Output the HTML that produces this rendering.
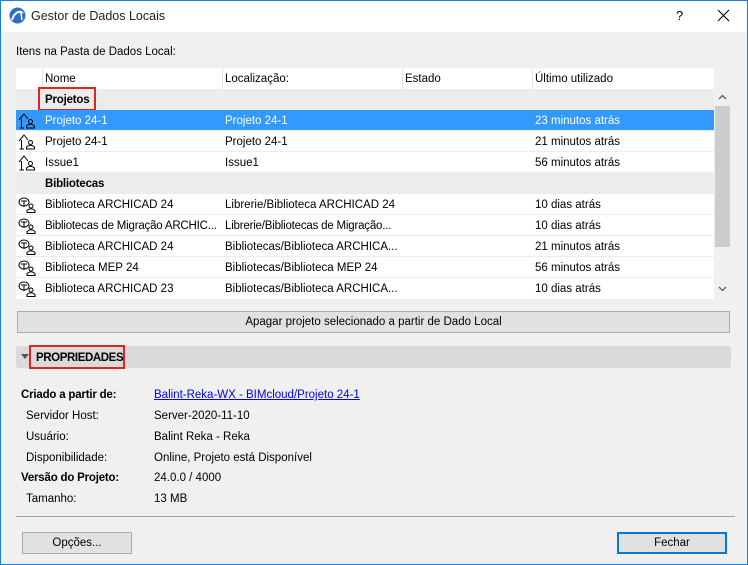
<!DOCTYPE html>
<html><head><meta charset="utf-8"><style>
*{margin:0;padding:0;box-sizing:border-box}
body{width:748px;height:565px;overflow:hidden;background:#f0f0f0;font-family:"Liberation Sans",sans-serif;font-size:11.5px;color:#000;position:relative}
.a{position:absolute;white-space:nowrap}
.t{margin-top:1px}
.win{position:absolute;left:0;top:0;width:748px;height:565px;border:1px solid #1a7fd4}
.row{position:absolute;left:16px;width:698px;height:21px;background:#fff;border-bottom:1px solid #ececec}
.row span{position:absolute;top:5px}
.grp{background:#ececec;border:none}
.sel{background:#3399ff;color:#fff}
.btn{position:absolute;background:#e1e1e1;border:1px solid #adadad;text-align:center;line-height:21px}
.b{font-weight:bold;letter-spacing:-0.2px}
svg{position:absolute}
</style></head><body>
<div class="win"></div>
<div class="a" style="left:1px;top:1px;width:746px;height:31px;background:#fff"></div>
<svg style="left:9px;top:7px" width="17" height="17" viewBox="0 0 17 17"><circle cx="8.5" cy="8.5" r="8" fill="#2c6fc9"/><path d="M3 13 C5 6 10 3 14 6" stroke="#fff" stroke-width="2" fill="none"/><path d="M12 6 L13 13" stroke="#fff" stroke-width="1.5"/></svg>
<div class="a" style="left:31px;top:9px;font-size:12.5px;color:#222">Gestor de Dados Locais</div>
<div class="a" style="left:676px;top:8px;font-size:13px">?</div>
<svg style="left:717px;top:9px" width="13" height="13"><path d="M1 1L12 12M12 1L1 12" stroke="#000" stroke-width="1.1"/></svg>
<div class="a" style="left:16px;top:46px">Itens na Pasta de Dados Local:</div>

<div class="a" style="left:16px;top:68px;width:698px;height:21px;background:#fff"></div>
<div class="a" style="left:42px;top:68px;width:1px;height:21px;background:#e5e5e5"></div>
<div class="a" style="left:222px;top:68px;width:1px;height:21px;background:#e5e5e5"></div>
<div class="a" style="left:402px;top:68px;width:1px;height:21px;background:#e5e5e5"></div>
<div class="a" style="left:532px;top:68px;width:1px;height:21px;background:#e5e5e5"></div>
<div class="a" style="left:45px;top:73px">Nome</div>
<div class="a" style="left:225px;top:73px">Localização:</div>
<div class="a" style="left:405px;top:73px">Estado</div>
<div class="a" style="left:535px;top:73px">Último utilizado</div>

<div class="row grp" style="top:89px"><span class="b" style="left:29px">Projetos</span></div>
<div class="a" style="left:38px;top:87px;width:58px;height:24px;border:2px solid #e52222"></div>
<div class="row sel" style="top:110px"><span style="left:29px">Projeto 24-1</span><span style="left:209px">Projeto 24-1</span><span style="left:519px">23 minutos atrás</span></div>
<div class="row" style="top:131px"><span style="left:29px">Projeto 24-1</span><span style="left:209px">Projeto 24-1</span><span style="left:519px">21 minutos atrás</span></div>
<div class="row" style="top:152px"><span style="left:29px">Issue1</span><span style="left:209px">Issue1</span><span style="left:519px">56 minutos atrás</span></div>
<div class="row grp" style="top:173px"><span class="b" style="left:29px">Bibliotecas</span></div>
<div class="row" style="top:194px"><span style="left:29px">Biblioteca ARCHICAD 24</span><span style="left:209px">Librerie/Biblioteca ARCHICAD 24</span><span style="left:519px">10 dias atrás</span></div>
<div class="row" style="top:215px"><span style="left:29px;letter-spacing:-0.2px">Bibliotecas de Migração ARCHIC...</span><span style="left:209px;letter-spacing:-0.2px">Librerie/Bibliotecas de Migração...</span><span style="left:519px">10 dias atrás</span></div>
<div class="row" style="top:236px"><span style="left:29px">Biblioteca ARCHICAD 24</span><span style="left:209px">Bibliotecas/Biblioteca ARCHICA...</span><span style="left:519px">21 minutos atrás</span></div>
<div class="row" style="top:257px"><span style="left:29px">Biblioteca MEP 24</span><span style="left:209px">Bibliotecas/Biblioteca MEP 24</span><span style="left:519px">56 minutos atrás</span></div>
<div class="row" style="top:278px;border:none"><span style="left:29px">Biblioteca ARCHICAD 23</span><span style="left:209px">Bibliotecas/Biblioteca ARCHICA...</span><span style="left:519px">10 dias atrás</span></div>

<svg style="left:18px;top:112px" width="20" height="18"><g stroke="#000" fill="none" stroke-width="1"><path d="M1 8 L6 2 L10 7"/><path d="M3.5 7 V16 M1.5 16 H6"/><circle cx="12.5" cy="9.5" r="2"/><path d="M8.5 16 V14 Q12.5 10.5 16.5 14 V16 Z"/></g></svg>
<svg style="left:18px;top:133px" width="20" height="18"><g stroke="#000" fill="none" stroke-width="1"><path d="M1 8 L6 2 L10 7"/><path d="M3.5 7 V16 M1.5 16 H6"/><circle cx="12.5" cy="9.5" r="2"/><path d="M8.5 16 V14 Q12.5 10.5 16.5 14 V16 Z"/></g></svg>
<svg style="left:18px;top:154px" width="20" height="18"><g stroke="#000" fill="none" stroke-width="1"><path d="M1 8 L6 2 L10 7"/><path d="M3.5 7 V16 M1.5 16 H6"/><circle cx="12.5" cy="9.5" r="2"/><path d="M8.5 16 V14 Q12.5 10.5 16.5 14 V16 Z"/></g></svg>
<svg style="left:18px;top:196px" width="20" height="18"><g stroke="#000" fill="none" stroke-width="1"><ellipse cx="6" cy="6" rx="5" ry="4"/><path d="M3 5 H9 M6 5 V11"/><circle cx="13" cy="10" r="2"/><path d="M9 16.5 V14.5 Q13 11 17 14.5 V16.5 Z"/></g></svg>
<svg style="left:18px;top:217px" width="20" height="18"><g stroke="#000" fill="none" stroke-width="1"><ellipse cx="6" cy="6" rx="5" ry="4"/><path d="M3 5 H9 M6 5 V11"/><circle cx="13" cy="10" r="2"/><path d="M9 16.5 V14.5 Q13 11 17 14.5 V16.5 Z"/></g></svg>
<svg style="left:18px;top:238px" width="20" height="18"><g stroke="#000" fill="none" stroke-width="1"><ellipse cx="6" cy="6" rx="5" ry="4"/><path d="M3 5 H9 M6 5 V11"/><circle cx="13" cy="10" r="2"/><path d="M9 16.5 V14.5 Q13 11 17 14.5 V16.5 Z"/></g></svg>
<svg style="left:18px;top:259px" width="20" height="18"><g stroke="#000" fill="none" stroke-width="1"><ellipse cx="6" cy="6" rx="5" ry="4"/><path d="M3 5 H9 M6 5 V11"/><circle cx="13" cy="10" r="2"/><path d="M9 16.5 V14.5 Q13 11 17 14.5 V16.5 Z"/></g></svg>
<svg style="left:18px;top:280px" width="20" height="18"><g stroke="#000" fill="none" stroke-width="1"><ellipse cx="6" cy="6" rx="5" ry="4"/><path d="M3 5 H9 M6 5 V11"/><circle cx="13" cy="10" r="2"/><path d="M9 16.5 V14.5 Q13 11 17 14.5 V16.5 Z"/></g></svg>

<div class="a" style="left:714px;top:89px;width:16px;height:209px;background:#f0f0f0"></div>
<div class="a" style="left:715px;top:106px;width:15px;height:141px;background:#cdcdcd"></div>
<svg style="left:718px;top:94px" width="9" height="6"><path d="M1 5 L4.5 1.5 L8 5" stroke="#606060" fill="none" stroke-width="1.3"/></svg>
<svg style="left:718px;top:286px" width="9" height="6"><path d="M1 1 L4.5 4.5 L8 1" stroke="#606060" fill="none" stroke-width="1.3"/></svg>

<div class="btn" style="left:17px;top:311px;width:713px;height:22px">Apagar projeto selecionado a partir de Dado Local</div>

<div class="a" style="left:16px;top:346px;width:715px;height:22px;background:#dadada;border-radius:3px"></div>
<svg style="left:21px;top:354px" width="8" height="6"><path d="M0 0 H8 L4 5 Z" fill="#555"/></svg>
<div class="a" style="left:29px;top:345px;width:96px;height:24px;border:2px solid #e52222"></div>
<div class="a b" style="left:36px;top:352px;letter-spacing:-0.4px">PROPRIEDADES</div>

<div class="a b" style="left:21px;top:389px">Criado a partir de:</div>
<div class="a" style="left:154px;top:389px;color:#0000ee;text-decoration:underline">Balint-Reka-WX - BIMcloud/Projeto 24-1</div>
<div class="a" style="left:26px;top:410px">Servidor Host:</div>
<div class="a" style="left:154px;top:410px">Server-2020-11-10</div>
<div class="a" style="left:26px;top:431px">Usuário:</div>
<div class="a" style="left:154px;top:431px">Balint Reka - Reka</div>
<div class="a" style="left:26px;top:452px">Disponibilidade:</div>
<div class="a" style="left:154px;top:452px">Online, Projeto está Disponível</div>
<div class="a b" style="left:21px;top:472px">Versão do Projeto:</div>
<div class="a" style="left:154px;top:472px">24.0.0 / 4000</div>
<div class="a" style="left:26px;top:493px">Tamanho:</div>
<div class="a" style="left:154px;top:493px">13 MB</div>

<div class="a" style="left:16px;top:516px;width:719px;height:1px;background:#a0a0a0"></div>
<div class="btn" style="left:22px;top:532px;width:110px;height:22px">Opções...</div>
<div class="btn" style="left:617px;top:532px;width:110px;height:22px;border:2px solid #0078d7;line-height:19px">Fechar</div>
</body></html>
